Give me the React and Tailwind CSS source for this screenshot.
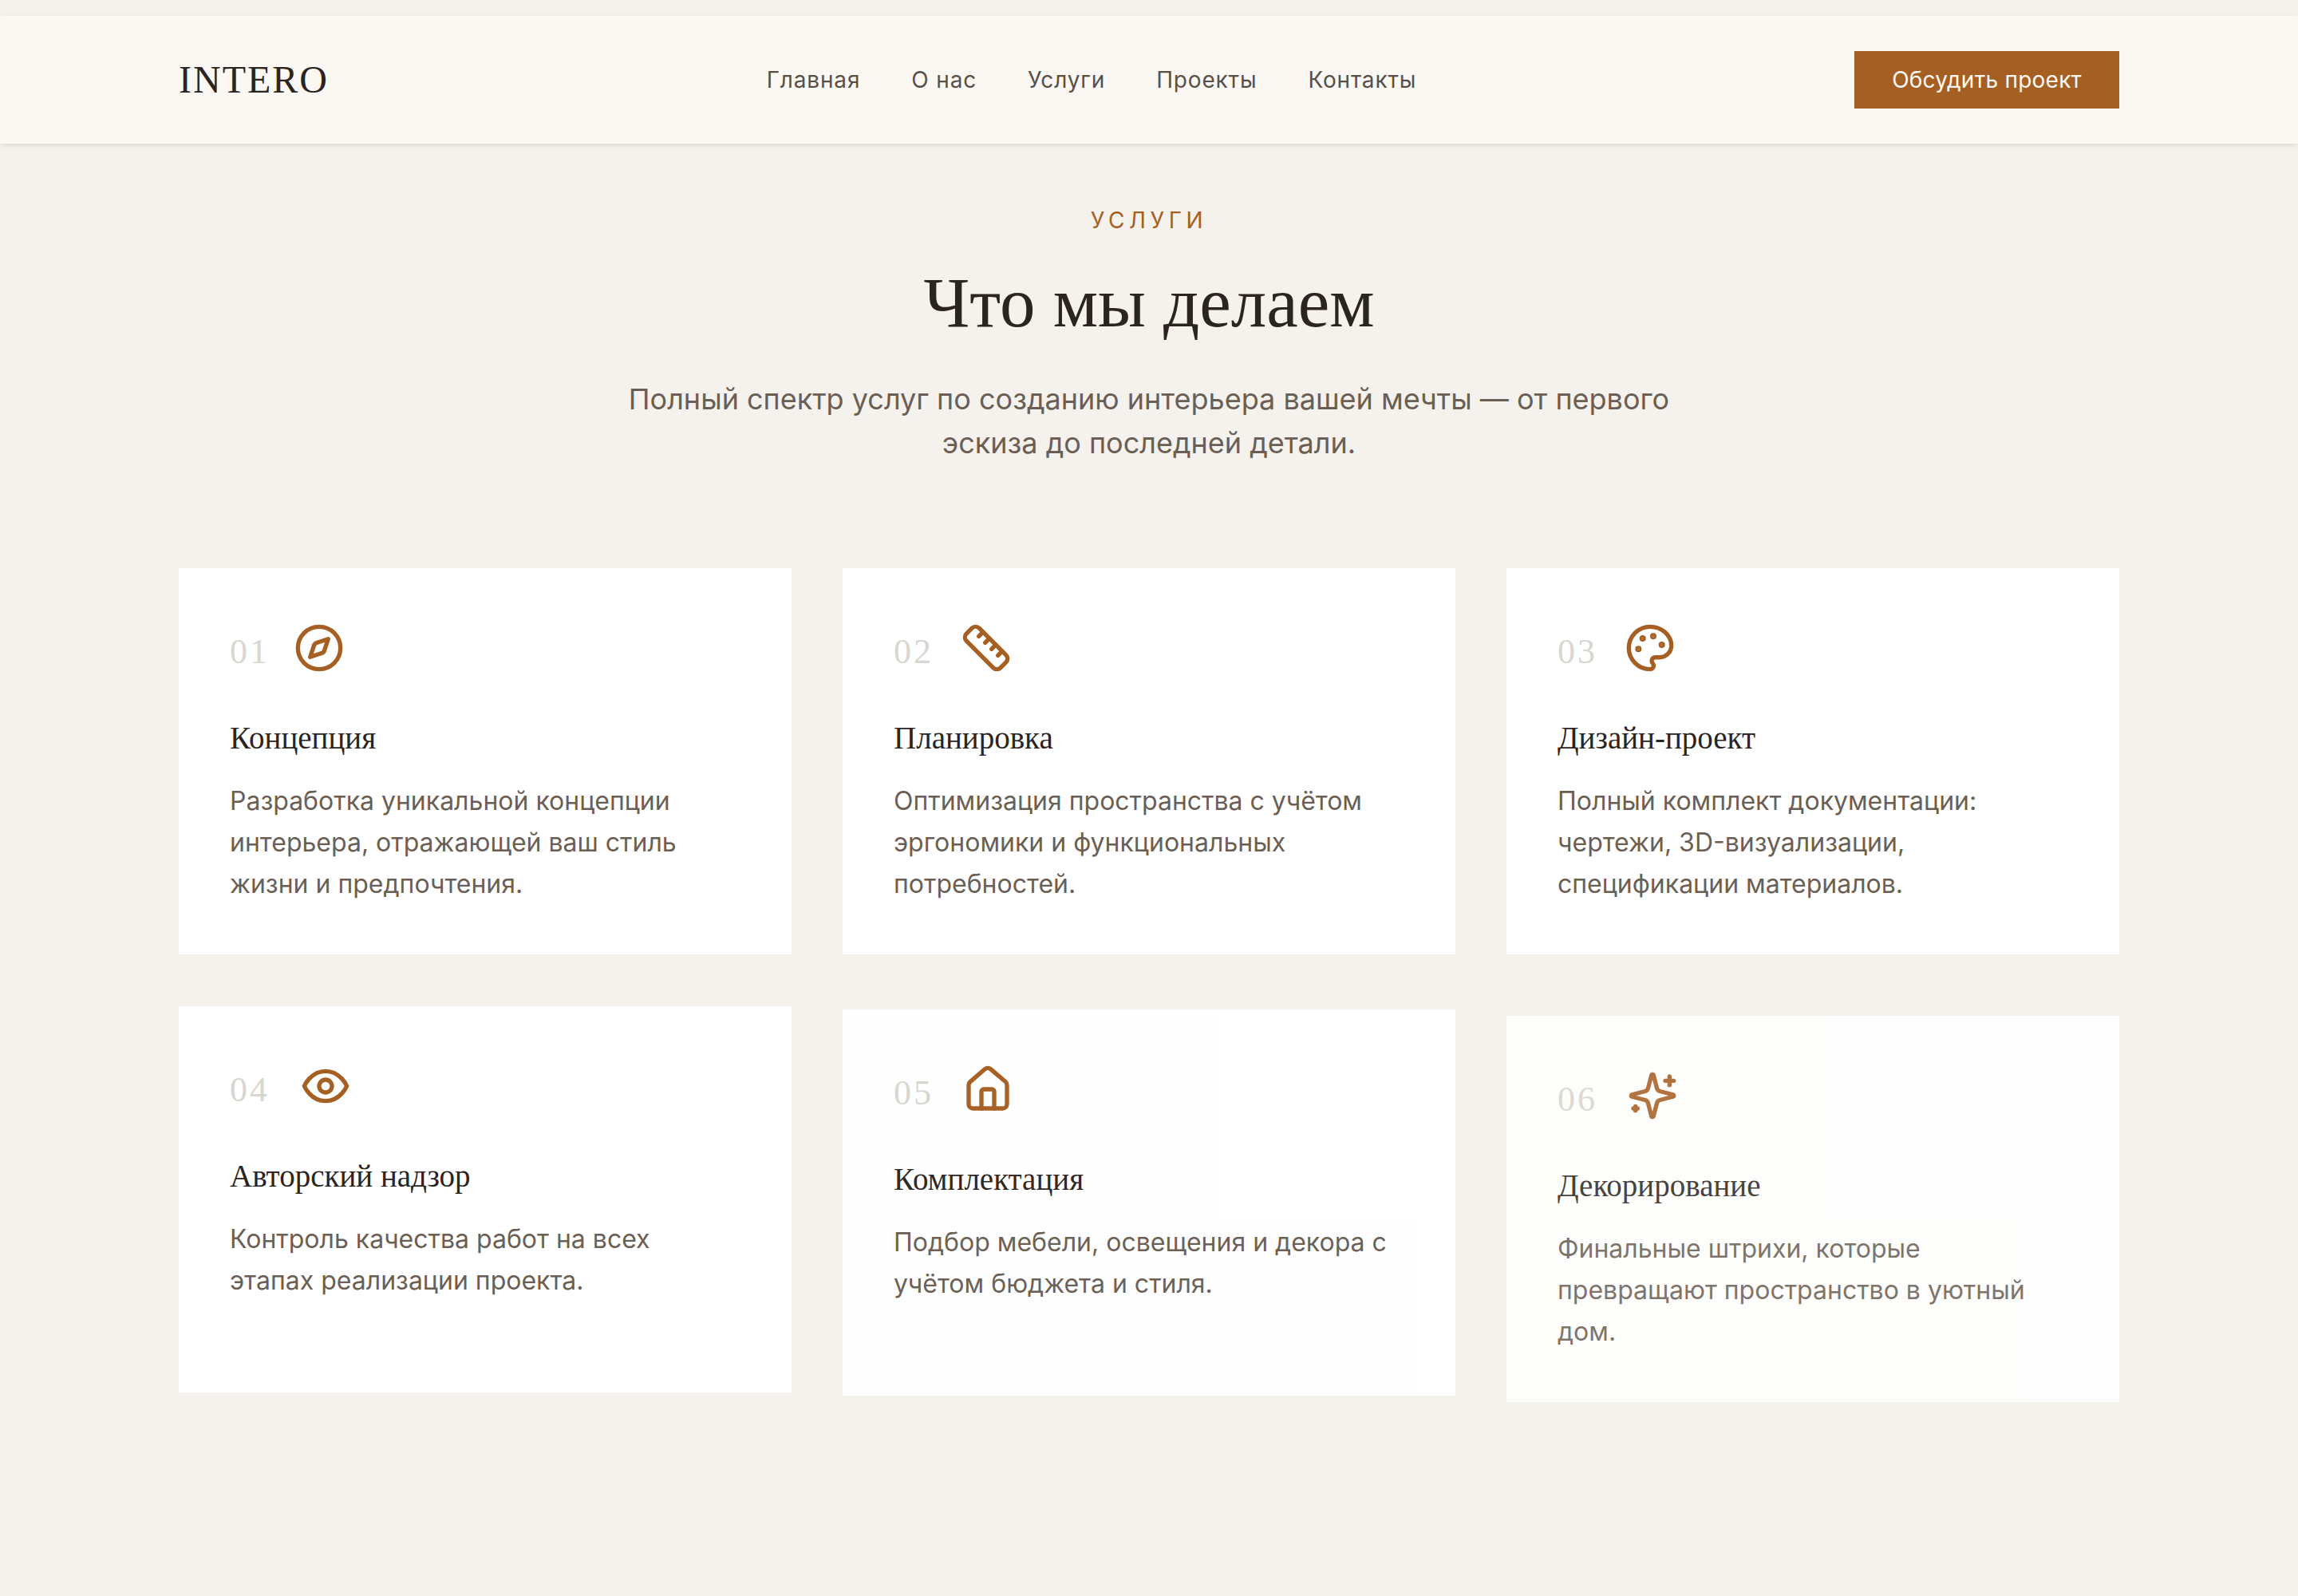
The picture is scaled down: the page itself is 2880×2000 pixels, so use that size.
import { Compass, Ruler, House } from 'lucide-react';

const navLinks = ['Главная', 'О нас', 'Услуги', 'Проекты', 'Контакты'];

// lucide's older palette, eye and sparkles outlines, the package's current ones differ from the design
function PaletteIcon({ className }) {
    return (
        <svg className={className} viewBox="0 0 24 24" fill="none" stroke="currentColor" strokeWidth="2" strokeLinecap="round" strokeLinejoin="round">
            <circle cx="13.5" cy="6.5" r=".5" fill="currentColor" />
            <circle cx="17.5" cy="10.5" r=".5" fill="currentColor" />
            <circle cx="8.5" cy="7.5" r=".5" fill="currentColor" />
            <circle cx="6.5" cy="12.5" r=".5" fill="currentColor" />
            <path d="M12 2C6.5 2 2 6.5 2 12s4.5 10 10 10c.926 0 1.648-.746 1.648-1.688 0-.437-.18-.835-.437-1.125-.29-.289-.438-.652-.438-1.125a1.64 1.64 0 0 1 1.668-1.668h1.996c3.051 0 5.555-2.503 5.555-5.554C21.965 6.012 17.461 2 12 2z" />
        </svg>
    );
}

function EyeIcon({ className }) {
    return (
        <svg className={className} viewBox="0 0 24 24" fill="none" stroke="currentColor" strokeWidth="2" strokeLinecap="round" strokeLinejoin="round">
            <path d="M2 12s3-7 10-7 10 7 10 7-3 7-10 7-10-7-10-7Z" />
            <circle cx="12" cy="12" r="3" />
        </svg>
    );
}

function SparklesIcon({ className }) {
    return (
        <svg className={className} viewBox="0 0 24 24" fill="none" stroke="currentColor" strokeWidth="2" strokeLinecap="round" strokeLinejoin="round">
            <path d="M9.937 15.5A2 2 0 0 0 8.5 14.063l-6.135-1.582a.5.5 0 0 1 0-.962L8.5 9.936A2 2 0 0 0 9.937 8.5l1.582-6.135a.5.5 0 0 1 .963 0L14.063 8.5A2 2 0 0 0 15.5 9.937l6.135 1.581a.5.5 0 0 1 0 .964L15.5 14.063a2 2 0 0 0-1.437 1.437l-1.582 6.135a.5.5 0 0 1-.963 0z" />
            <path d="M20 3v4" />
            <path d="M22 5h-4" />
            <path d="M4 17v2" />
            <path d="M5 18H3" />
        </svg>
    );
}

const services = [
    { num: '01', numWidth: 'w-[48px]', Icon: Compass, title: 'Концепция', text: 'Разработка уникальной концепции интерьера, отражающей ваш стиль жизни и предпочтения.', offset: '' },
    { num: '02', numWidth: 'w-[52px]', Icon: Ruler, title: 'Планировка', text: 'Оптимизация пространства с учётом эргономики и функциональных потребностей.', offset: '' },
    { num: '03', numWidth: 'w-[52px]', Icon: PaletteIcon, title: 'Дизайн-проект', text: 'Полный комплект документации: чертежи, 3D-визуализации, спецификации материалов.', offset: '' },
    { num: '04', numWidth: 'w-[56px]', Icon: EyeIcon, title: 'Авторский надзор', text: 'Контроль качества работ на всех этапах реализации проекта.', offset: 'mt-[1px]' },
    { num: '05', numWidth: 'w-[54px]', Icon: House, title: 'Комплектация', text: 'Подбор мебели, освещения и декора с учётом бюджета и стиля.', offset: 'mt-[5px] opacity-[0.98]' },
    { num: '06', numWidth: 'w-[55px]', Icon: SparklesIcon, title: 'Декорирование', text: 'Финальные штрихи, которые превращают пространство в уютный дом.', offset: 'mt-[13px] opacity-[0.85]' },
];

function ServiceCard({ num, numWidth, Icon, title, text, offset }) {
    return (
        <div className={`h-[484px] bg-white p-[64px] ${offset}`}>
            <div className="flex h-[72px] items-center gap-[32px] mb-[45px]">
                <span className={`${numWidth} pt-[10px] font-['Liberation_Serif',serif] text-[44px] tracking-[3px] text-[#d9d5cf]`}>{num}</span>
                <Icon className="h-16 w-16 shrink-0 text-[#a65f23]" />
            </div>
            <h3 className="mb-[21px] font-['Liberation_Serif',serif] text-[39px] leading-[64px] text-[#2c2420]">{title}</h3>
            <p className="text-[32px] leading-[52px] text-[#6b5f55]">{text}</p>
        </div>
    );
}

export default function App() {
    return (
        <div className="min-h-screen bg-[#f5f2ed] pt-[20px] font-['Inter',sans-serif]">
            {/* Header */}
            <header className="h-[160px] bg-[#fbf8f3] shadow-[0_2px_6px_rgba(0,0,0,0.1)]">
                <div className="mx-auto flex h-full max-w-[2432px] items-center justify-between">
                    <a className="font-['Liberation_Serif',serif] text-[48px] tracking-[2px] text-[#2c2420]">INTERO</a>
                    <nav className="flex items-center gap-[64px]">
                        {navLinks.map((link) => (
                            <a key={link} className="text-[28px] tracking-[0.84px] text-[#5a4f46]">{link}</a>
                        ))}
                    </nav>
                    <button className="h-[72px] w-[332px] bg-[#a65f23] text-[28px] tracking-[0.25px] text-[#fbf8f3]">Обсудить проект</button>
                </div>
            </header>

            {/* Intro */}
            <section className="pt-[76px] text-center">
                <p className="text-[28px] leading-[40px] tracking-[5.6px] text-[#a65f23]">УСЛУГИ</p>
                <h2 className="mt-[35px] font-['Liberation_Serif',serif] text-[89px] leading-[96px] text-[#2c2420]">Что мы делаем</h2>
                <p className="mx-auto mt-[46px] max-w-[1344px] text-[36px] leading-[55px] text-[#6b5f55]">
                    Полный спектр услуг по созданию интерьера вашей мечты — от первого эскиза до последней детали.
                </p>
            </section>

            {/* Cards */}
            <section className="mx-auto mt-[129px] grid max-w-[2432px] grid-cols-3 items-start gap-[64px]">
                {services.map((service) => (
                    <ServiceCard key={service.num} {...service} />
                ))}
            </section>
        </div>
    );
}
